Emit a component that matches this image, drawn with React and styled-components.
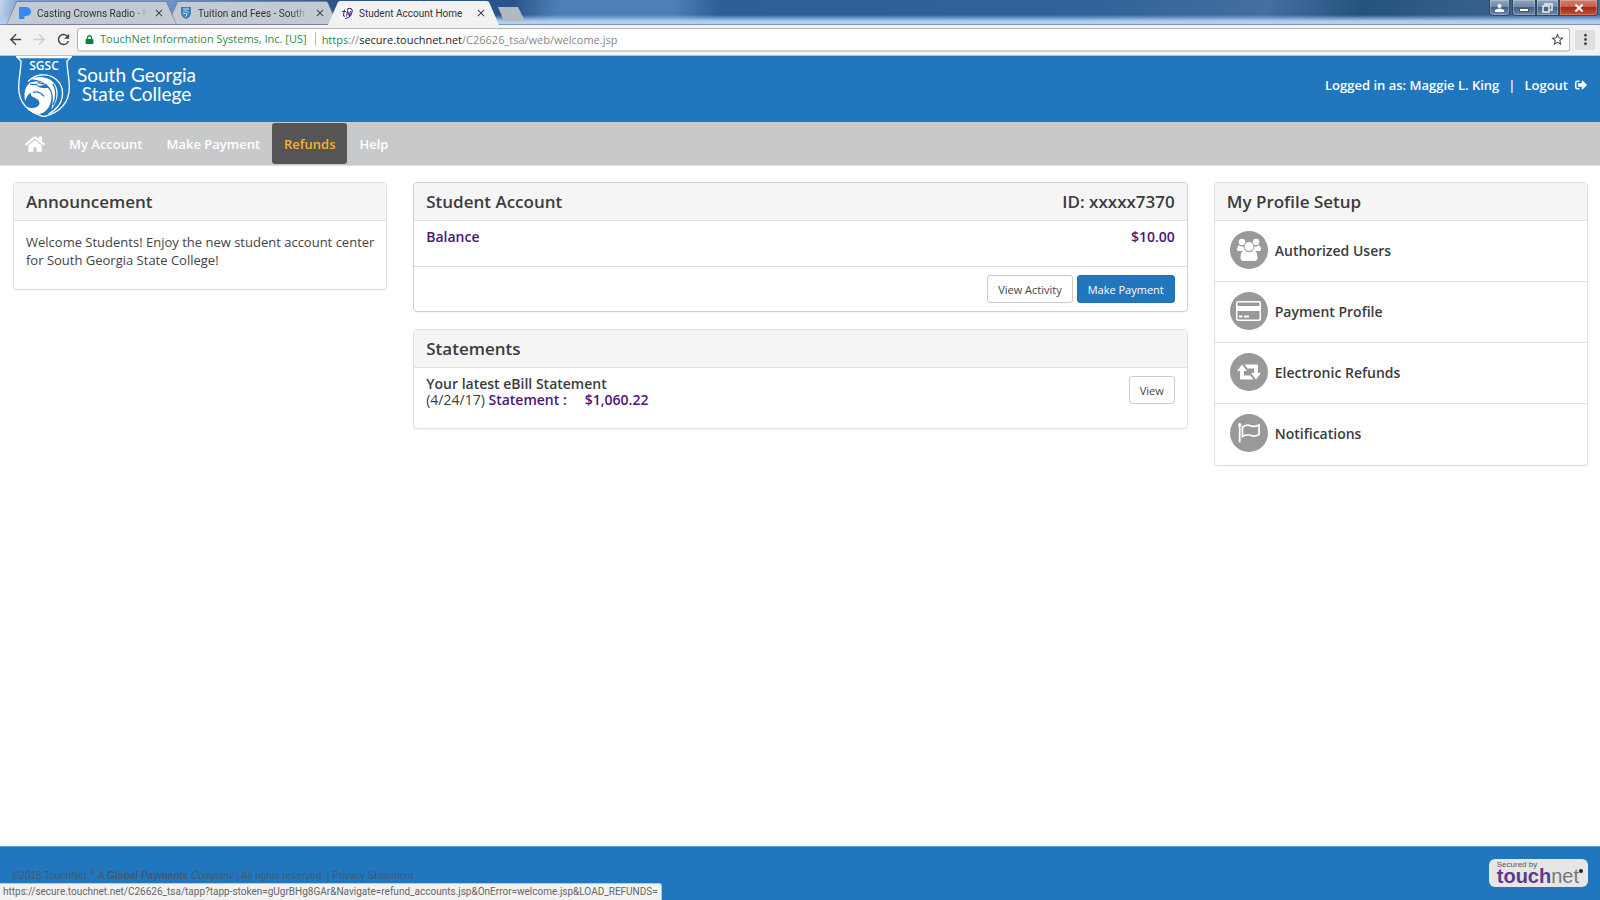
import React, { useState } from "react";
import styled, { createGlobalStyle } from "styled-components";
import { FaHome, FaLock, FaSignOutAlt } from "react-icons/fa";
import { MdArrowBack, MdArrowForward, MdClose, MdMoreVert, MdRefresh, MdStarBorder } from "react-icons/md";

const GlobalStyle = createGlobalStyle`
  *, *::before, *::after {
    box-sizing: border-box;
    padding: 0;
    margin: 0;
  }

  body {
    font-family: "Open Sans", "Noto Sans", sans-serif;
    font-size: 13px;
    color: #444;
    background: #fff;
  }

  button {
    font-family: inherit;
    border: 0;
    background: none;
    cursor: pointer;
  }

  a {
    color: inherit;
    text-decoration: none;
  }
`;

const Page = styled.div`
  min-height: 100vh;
  display: flex;
  flex-direction: column;
`;

/* browser window */

const TitleBar = styled.div`
  height: 25px;
  display: flex;
  align-items: flex-start;
  background:
    linear-gradient(to bottom, rgba(169, 205, 242, 0) 15px, #a9cdf2 21px, #b0d2f5 24px, #8296ab 24px),
    linear-gradient(100deg, #c3d7ec 0, #7ba0cb 20px, #6f97c6 160px, #2c5588 330px, #2a5489 32%, #4f81b7 35%, #4e80b5 42%, #2c5f96 45%, #2f6399 68%, #466e9f 79%, #25527f 85%, #355d8c 91%, #416b9b 100%);
`;

const Tabs = styled.div`
  height: 25px;
  padding-left: 6px;
  display: flex;
  align-items: flex-end;
`;

const Tab = styled.div`
  position: relative;
  z-index: ${props => props.$order};
  width: 171px;
  height: 24px;
  margin-right: -10px;
  padding: 0 12px 0 13px;
  display: flex;
  align-items: center;
  gap: 6px;
  color: #333;
  font-family: Roboto, "Open Sans", sans-serif;
  font-size: 10px;
  background: ${props => (props.$active ? "#f2f2f2" : "#75869a")};
  clip-path: polygon(0 100%, 10px 1px, 12px 0, calc(100% - 12px) 0, calc(100% - 10px) 1px, 100% 100%);

  &::before {
    content: "";
    position: absolute;
    z-index: -1;
    inset: 1px 1px ${props => (props.$active ? "0" : "1px")};
    background: ${props => (props.$active ? "#f2f2f2" : "#c3cad3")};
    clip-path: polygon(0 100%, 10px 0, calc(100% - 10px) 0, 100% 100%);
  }

  svg {
    flex: none;
  }
`;

const TabTitle = styled.span`
  flex: 1;
  overflow: hidden;
  white-space: nowrap;
  mask-image: ${props => (props.$active ? "none" : "linear-gradient(to right, #000 85%, transparent)")};
`;

const TabClose = styled.button`
  width: 12px;
  height: 12px;
  display: flex;
  color: #444;
`;

const NewTab = styled.button`
  width: 27px;
  height: 14px;
  margin: 7px 0 0 9px;
  background: #b1b9c2;
  clip-path: polygon(0 0, 20px 0, 100% 100%, 6px 100%);
`;

const WindowButtons = styled.div`
  margin-left: auto;
  padding-right: 2px;
  display: flex;
`;

const WindowButton = styled.button`
  width: ${props => props.$width}px;
  height: 16px;
  margin-right: ${props => (props.$apart ? "2px" : "0")};
  display: flex;
  justify-content: center;
  align-items: center;
  border: 1px solid #33485f;
  border-top: 0;
  border-radius: ${props => props.$corners || "0"};
  box-shadow: inset 0 0 0 1px rgba(255, 255, 255, 0.25);
  background: ${props => (props.$danger
    ? "linear-gradient(#cf7f6e 0, #c4604b 45%, #a92b12 50%, #c5502f 100%)"
    : "linear-gradient(#8fa6c1 0, #7189a8 45%, #45628a 50%, #6a88ab 100%)")};
`;

const Toolbar = styled.div`
  height: 31px;
  padding: 3px 5px 4px 3px;
  display: flex;
  align-items: center;
  background: #f2f2f2;
  border-bottom: 1px solid #c9beb4;
`;

const ToolButton = styled.button`
  width: 24px;
  height: 20px;
  display: flex;
  justify-content: center;
  align-items: center;
  color: ${props => (props.disabled ? "#ccc" : "#444")};
  font-size: 17px;
`;

const MenuButton = styled(ToolButton)`
  width: 20px;
  margin-left: 5px;
  background: #dfdfdf;
  border-radius: 2px;
`;

const AddressBar = styled.div`
  flex: 1;
  height: 24px;
  margin-left: 2px;
  padding-left: 7px;
  display: flex;
  align-items: center;
  background: #fff;
  border: 1px solid #b5b5b5;
  border-bottom: 2px solid #cfcfcf;
  border-radius: 3px;
  font-size: 11px;
`;

const Certificate = styled.button`
  padding-right: 8px;
  display: flex;
  align-items: center;
  gap: 6px;
  border-right: 1px solid #bbb;
  color: #2d8a4e;
  font-size: 11px;
  line-height: 14px;

  svg {
    color: #0b8043;
  }
`;

const Address = styled.div`
  flex: 1;
  padding-left: 6px;
  color: #888;
  outline: none;
  white-space: nowrap;
`;

const Scheme = styled.span`
  color: #2d8a4e;
`;

const Host = styled.span`
  color: #222;
`;

const StatusBubble = styled.div`
  position: fixed;
  left: 0;
  bottom: 0;
  height: 17px;
  padding: 0 3px;
  background: #f2f2f2;
  border-top: 1px solid #c5c5c5;
  border-right: 1px solid #c5c5c5;
  border-top-right-radius: 3px;
  color: #666;
  font-family: Roboto, "Open Sans", sans-serif;
  font-size: 10px;
  line-height: 16px;
  white-space: nowrap;
`;

/* site */

const Header = styled.header`
  height: 66px;
  padding: 0 13px 0 16px;
  display: flex;
  align-items: flex-start;
  justify-content: space-between;
  background: #2077be;
  color: #fff;
`;

const Brand = styled.a`
  display: flex;
  gap: 5px;
`;

const BrandName = styled.span`
  padding-top: 9px;
  font-family: Lato, "Open Sans", sans-serif;
  font-size: 19px;
  line-height: 19px;
  text-align: center;
`;

const Session = styled.div`
  align-self: center;
  padding-bottom: 8px;
  display: flex;
  gap: 9px;
  font-weight: 600;
`;

const Logout = styled.a`
  display: flex;
  align-items: center;
  gap: 7px;
`;

const Nav = styled.nav`
  height: 44px;
  padding: 1px 13px;
  display: flex;
  background: #c8c9cb;
  border-bottom: 1px solid #dedede;
`;

const NavLink = styled.a`
  height: 41px;
  padding: 0 12px;
  display: flex;
  align-items: center;
  border-radius: 3px;
  background: ${props => (props.$active ? "#555" : "none")};
  color: ${props => (props.$active ? "#f5b335" : "#fff")};
  font-weight: 600;
`;

const Content = styled.main`
  flex: 1;
  padding: 16px 12px 16px 13px;
  display: grid;
  grid-template-columns: minmax(0, 374fr) minmax(0, 774fr) minmax(0, 374fr);
  gap: 26px;
  align-items: start;
`;

const Column = styled.div`
  display: flex;
  flex-direction: column;
  gap: 17px;
`;

const Card = styled.section`
  border: 1px solid ${props => (props.$strong ? "#d0d0d0" : "#e1e1e1")};
  border-radius: 4px;
  background: #fff;
  box-shadow: 0 1px 1px rgba(0, 0, 0, 0.05);
`;

const CardHeader = styled.div`
  height: 38px;
  padding: 0 12px;
  display: flex;
  justify-content: space-between;
  align-items: center;
  background: #f5f5f5;
  border-bottom: 1px solid #e1e1e1;
  border-radius: 3px 3px 0 0;
`;

const CardTitle = styled.h2`
  color: #3c3c3c;
  font-size: 17px;
  font-weight: 600;
`;

const CardText = styled.p`
  padding: 12px 8px 20px 12px;
  line-height: 18px;
`;

const BalanceRow = styled.div`
  height: 46px;
  padding: 6px 12px;
  display: flex;
  justify-content: space-between;
  border-bottom: 1px solid #dcdcdc;
`;

const Amount = styled.span`
  color: #4b1677;
  font-size: 14px;
  font-weight: 600;
`;

const Actions = styled.div`
  padding: 8px 12px;
  display: flex;
  justify-content: flex-end;
  gap: 4px;
`;

const Button = styled.button`
  height: 28px;
  padding: 0 10px;
  border: 1px solid ${props => (props.$primary ? "#1d6fb2" : "#ccc")};
  border-radius: 3px;
  background: ${props => (props.$primary ? "#2077be" : "#fff")};
  color: ${props => (props.$primary ? "#fff" : "#444")};
  font-size: 11px;
`;

const StatementBody = styled.div`
  min-height: 60px;
  padding: 8px 12px;
  display: flex;
  justify-content: space-between;
  align-items: flex-start;
`;

const StatementText = styled.div`
  color: #3c3c3c;
  font-size: 14px;
  font-weight: 600;
  line-height: 16px;

  ${Amount} + ${Amount} {
    margin-left: 18px;
  }
`;

const StatementDate = styled.span`
  font-weight: 400;
`;

const ProfileList = styled.ul`
  list-style: none;
`;

const ProfileItem = styled.li`
  height: 61px;
  padding: 10px 15px;
  border-bottom: 1px solid #e1e1e1;

  &:last-child {
    border-bottom: 0;
  }
`;

const ProfileLink = styled.a`
  display: flex;
  align-items: center;
  gap: 7px;
  color: #3c3c3c;
  font-size: 14px;
  font-weight: 600;
`;

const RoundIcon = styled.span`
  width: 38px;
  height: 38px;
  display: flex;
  justify-content: center;
  align-items: center;
  border-radius: 50%;
  background: #999;
`;

const Footer = styled.footer`
  height: 54px;
  padding: 0 12px;
  display: flex;
  justify-content: space-between;
  align-items: center;
  background: #2077be;
  border-top: 1px solid #5b9bd0;
`;

const Copyright = styled.p`
  padding-top: 4px;
  font-family: "Liberation Sans", Arial, sans-serif;
  font-size: 10px;
  color: #46586c;

  sup {
    font-size: 8px;
    line-height: 8px;
  }
`;

const SecuredBy = styled.a`
  height: 28px;
  margin-bottom: 1px;
  padding: 2px 5px 0 8px;
  display: flex;
  flex-direction: column;
  border-radius: 6px;
  background: #e6e6e6;
  color: #555;
  font-family: "Liberation Sans", Arial, sans-serif;
  font-size: 8px;
  line-height: 8px;
`;

const TouchnetName = styled.span`
  display: flex;
  color: #777;
  font-size: 20px;
  line-height: 15px;

  b {
    color: #5b3b8c;
  }

  &::after {
    content: "";
    width: 4px;
    height: 4px;
    border-radius: 50%;
    background: #222;
  }
`;

function CollegeLogo() {
  return (
    <svg width="56" height="61" viewBox="48 16 168 183" fill="none" stroke="#fff">
      <path d="M49 17 H215 L201 31 C201 58 208 80 208 112 C207 158 176 186 132 198 C88 186 57 158 56 112 C56 80 63 58 63 31 Z" fill="#2077be" strokeWidth="4" />
      <path d="M49 17 H215 L208 23 H56 Z" fill="#fff" stroke="none" />
      <text x="132" y="58" textAnchor="middle" fill="#fff" stroke="none" fontFamily="Open Sans, sans-serif" fontSize="36" fontWeight="600">SGSC</text>
      <path d="M84 93 C102 71 142 64 168 86 C194 108 193 145 172 169 C165 178 156 184 146 190" strokeWidth="4" />
      <path d="M92 86 C122 71 157 82 169 108 C178 130 171 156 154 176 C161 151 161 128 149 111 C137 95 116 87 92 86 Z" fill="#fff" stroke="none" />
      <path d="M76 152 C70 128 75 106 92 95 C106 90 122 92 137 99 C128 106 116 106 107 103 C117 113 132 113 144 112 C153 121 157 137 153 151 C149 172 136 186 119 190 C103 187 88 179 80 168 C96 176 114 171 118 161 C121 150 111 143 98 138 C93 136 92 130 93 126 C84 130 78 140 76 152 Z" fill="#fff" stroke="none" />
      <path d="M90 101 L112 101 M113 96 L133 100 M99 125 C111 121 124 127 132 137 M158 99 C170 115 170 145 159 163" stroke="#2077be" strokeWidth="4" />
    </svg>
  );
}

function UsersIcon() {
  return (
    <svg width="24" height="24" viewBox="0 0 24 24" fill="#fff">
      <circle cx="5" cy="4" r="3.3" />
      <circle cx="19" cy="4" r="3.3" />
      <path d="M0 12 C0 9 1 7.500 2.500 7.500 Q5 9.500 7 8 L9 13 H2 Q0 13 0 12 Z" />
      <path d="M24 12 C24 9 23 7.500 21.500 7.500 Q19 9.500 17 8 L15 13 H22 Q24 13 24 12 Z" />
      <path d="M3.500 20 C3.500 15 5 12.500 7.500 12.500 Q12 16 16.500 12.500 C19 12.500 20.500 15 20.500 20 Q20.500 23 17.500 23 H6.500 Q3.500 23 3.500 20 Z" />
      <circle cx="12" cy="8.500" r="5" stroke="#999" strokeWidth="1" />
    </svg>
  );
}

function CardIcon() {
  return (
    <svg width="25" height="20" viewBox="0 0 25 20" fill="#999">
      <rect width="25" height="20" rx="2" fill="#fff" />
      <path d="M1.500 2.500 Q1.500 1.500 2.500 1.500 H22.500 Q23.500 1.500 23.500 2.500 V5 H1.500 Z M1.500 10 H23.500 V17.500 Q23.500 18.500 22.500 18.500 H2.500 Q1.500 18.500 1.500 17.500 Z" />
      <path d="M3 14.500 H6.500 V16.500 H3 Z M8 14.500 H13 V16.500 H8 Z" fill="#fff" />
    </svg>
  );
}

function RefundIcon() {
  const arrow = "M0 6.500 L5 0 L10 6.500 H7 V11 H13.500 L16.500 15 H4 Q3 15 3 14 V6.500 Z";
  return (
    <svg width="24" height="16" viewBox="0 0 24 15" fill="#fff">
      <path d={arrow} />
      <path d={arrow} transform="rotate(180 12 7.500)" />
    </svg>
  );
}

function FlagIcon() {
  return (
    <svg width="22" height="20" viewBox="0 0 22 20" fill="none" stroke="#fff">
      <circle cx="1.700" cy="1.700" r="1.700" fill="#fff" stroke="none" />
      <path d="M1.700 2 V19.500" strokeWidth="1.800" />
      <path d="M4.500 4 C7.500 2 10 1.500 12.500 2.700 C15.500 4.300 18 3.500 21 2 V11.500 C18 13.500 15.500 13.800 12.500 12.300 C10 11.200 7.500 11.700 4.500 13.500 Z" strokeWidth="1.700" />
    </svg>
  );
}

function PandoraIcon() {
  return (
    <svg width="12" height="12" viewBox="0 0 12 12">
      <path d="M0 0 H6.500 C10 0 12 1.800 12 4.500 C12 7.500 9.700 9 6.500 9 H5.500 V12 H0 Z" fill="#3688f5" />
    </svg>
  );
}

function ShieldIcon() {
  return (
    <svg width="12" height="12" viewBox="0 0 12 12">
      <path d="M1 0 H11 V6 C11 9 9 11 6 12 C3 11 1 9 1 6 Z" fill="#3b80b8" />
      <path d="M3 2 H9 M3 5 C5 3 8 4 9 6 M3 7 L6 6 L7 8 L5 10" fill="none" stroke="#d5e4f0" strokeWidth="1" />
    </svg>
  );
}

function TouchnetIcon() {
  return (
    <svg width="12" height="12" viewBox="0 0 12 12" fill="none" stroke="#4b2a84" strokeWidth="1.100">
      <rect width="12" height="12" fill="#fff" stroke="none" />
      <path d="M1 4.500 H5 M3.500 2.500 L2.500 8 Q2.500 9.500 4 9 M5.500 9.500 L6.500 4 L8.500 9 L9.500 4 M6 2.500 C9 0 12 2 11 5 C10.500 8 8 11 4 11.500" />
    </svg>
  );
}

const tabs = [
  { title: "Casting Crowns Radio - N", icon: <PandoraIcon /> },
  { title: "Tuition and Fees - South", icon: <ShieldIcon /> },
  { title: "Student Account Home", icon: <TouchnetIcon />, active: true },
];

const menu = ["My Account", "Make Payment", "Refunds", "Help"];

const profile = [
  { label: "Authorized Users", icon: <UsersIcon /> },
  { label: "Payment Profile", icon: <CardIcon /> },
  { label: "Electronic Refunds", icon: <RefundIcon /> },
  { label: "Notifications", icon: <FlagIcon /> },
];

function Browser() {
  return (
    <>
      <TitleBar>
        <Tabs>
          {tabs.map((tab, i) => (
            <Tab key={tab.title} $active={tab.active} $order={tab.active ? 9 : 5 - i}>
              {tab.icon}
              <TabTitle $active={tab.active}>{tab.title}</TabTitle>
              <TabClose aria-label="Close tab"><MdClose size={12} /></TabClose>
            </Tab>
          ))}
        </Tabs>
        <NewTab aria-label="New tab" />
        <WindowButtons>
          <WindowButton $width={21} $apart $corners="0 0 4px 4px" aria-label="User">
            <svg width="9" height="8" viewBox="0 0 9 8" fill="#fff"><circle cx="4.500" cy="2" r="2" /><path d="M0 8 V6 Q4.500 3 9 6 V8 Z" /></svg>
          </WindowButton>
          <WindowButton $width={24} $corners="0 0 0 4px" aria-label="Minimize">
            <svg width="10" height="8" viewBox="0 0 10 8"><rect x="0.500" y="4.500" width="9" height="3" fill="#fff" stroke="#555" /></svg>
          </WindowButton>
          <WindowButton $width={23} aria-label="Restore">
            <svg width="11" height="10" viewBox="0 0 11 10" fill="none" stroke="#eee" strokeWidth="1.500"><path d="M3 2 V1 H10 V7 H8" /><rect x="1" y="3" width="6" height="6" fill="#53647a" /></svg>
          </WindowButton>
          <WindowButton $width={39} $danger $corners="0 0 4px 0" aria-label="Close">
            <svg width="10" height="8" viewBox="0 0 11 9" stroke="#f2f2f2" strokeWidth="2.500"><path d="M1.500 0.500 L9.500 8.500 M9.500 0.500 L1.500 8.500" /></svg>
          </WindowButton>
        </WindowButtons>
      </TitleBar>
      <Toolbar>
        <ToolButton aria-label="Back"><MdArrowBack /></ToolButton>
        <ToolButton aria-label="Forward" disabled><MdArrowForward /></ToolButton>
        <ToolButton aria-label="Reload"><MdRefresh /></ToolButton>
        <AddressBar>
          <Certificate><FaLock size={9} />TouchNet Information Systems, Inc. [US]</Certificate>
          <Address role="textbox" aria-label="Address" contentEditable suppressContentEditableWarning spellCheck={false}>
            <Scheme>https</Scheme>://<Host>secure.touchnet.net</Host>/C26626_tsa/web/welcome.jsp
          </Address>
          <ToolButton aria-label="Bookmark"><MdStarBorder size={15} /></ToolButton>
        </AddressBar>
        <MenuButton aria-label="Menu"><MdMoreVert /></MenuButton>
      </Toolbar>
    </>
  );
}

function App() {
  const [current, setCurrent] = useState("Refunds");

  return (
    <Page>
      <GlobalStyle />
      <Browser />
      <Header>
        <Brand href="#" aria-label="South Georgia State College">
          <CollegeLogo />
          <BrandName>South Georgia<br />State College</BrandName>
        </Brand>
        <Session>
          <span>Logged in as: Maggie L. King</span>
          <span>|</span>
          <Logout href="#">Logout <FaSignOutAlt size={12} /></Logout>
        </Session>
      </Header>
      <Nav>
        <NavLink href="#" aria-label="Home"><FaHome size={20} /></NavLink>
        {menu.map(item => (
          <NavLink key={item} href="#" $active={item === current} onClick={() => setCurrent(item)}>{item}</NavLink>
        ))}
      </Nav>
      <Content>
        <Card>
          <CardHeader><CardTitle>Announcement</CardTitle></CardHeader>
          <CardText>Welcome Students! Enjoy the new student account center for South Georgia State College!</CardText>
        </Card>
        <Column>
          <Card $strong>
            <CardHeader>
              <CardTitle>Student Account</CardTitle>
              <CardTitle as="span">ID: xxxxx7370</CardTitle>
            </CardHeader>
            <BalanceRow>
              <Amount>Balance</Amount>
              <Amount>$10.00</Amount>
            </BalanceRow>
            <Actions>
              <Button>View Activity</Button>
              <Button $primary>Make Payment</Button>
            </Actions>
          </Card>
          <Card>
            <CardHeader><CardTitle>Statements</CardTitle></CardHeader>
            <StatementBody>
              <StatementText>
                Your latest eBill Statement<br />
                <StatementDate>(4/24/17)</StatementDate> <Amount>Statement :</Amount><Amount>$1,060.22</Amount>
              </StatementText>
              <Button>View</Button>
            </StatementBody>
          </Card>
        </Column>
        <Card>
          <CardHeader><CardTitle>My Profile Setup</CardTitle></CardHeader>
          <ProfileList>
            {profile.map(item => (
              <ProfileItem key={item.label}>
                <ProfileLink href="#">
                  <RoundIcon>{item.icon}</RoundIcon>
                  {item.label}
                </ProfileLink>
              </ProfileItem>
            ))}
          </ProfileList>
        </Card>
      </Content>
      <Footer>
        <Copyright>
          ©2018 TouchNet <sup>®</sup> <i>A <b>Global Payments</b> Company</i> | All rights reserved. | <a href="#">Privacy Statement</a>
        </Copyright>
        <SecuredBy href="#">
          Secured by
          <TouchnetName><b>touch</b>net</TouchnetName>
        </SecuredBy>
      </Footer>
      <StatusBubble>
        https://secure.touchnet.net/C26626_tsa/tapp?tapp-stoken=gUgrBHg8GAr&amp;Navigate=refund_accounts.jsp&amp;OnError=welcome.jsp&amp;LOAD_REFUNDS=
      </StatusBubble>
    </Page>
  );
}

export default App;
